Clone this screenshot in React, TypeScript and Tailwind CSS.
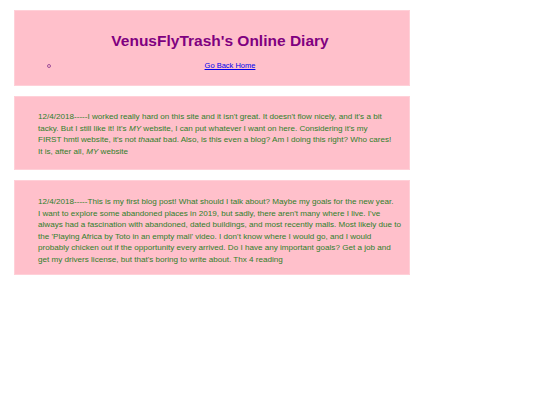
import React from 'react';

const body = '"Comic Sans MS", "Liberation Sans", sans-serif';

function Post({ lines, h, pt }: { lines: React.ReactNode[]; h: string; pt: string }) {
  return (
    <div className={`w-[396px] bg-[#ffc0cb] border border-[#ffd0d8] pl-[23px] ${h} ${pt}`}>
      <p className="text-[8.1px] leading-[11.6px] text-[#2f7f2a] whitespace-nowrap" style={{ fontFamily: body }}>
        {lines.map((l, i) => (
          <React.Fragment key={i}>
            {l}
            {i < lines.length - 1 && <br />}
          </React.Fragment>
        ))}
      </p>
    </div>
  );
}

export default function App() {
  return (
    <div className="min-h-[405px] bg-white pl-[14px] pt-[10px] flex flex-col gap-[10px]" style={{ fontFamily: body }}>
      <div className="w-[396px] h-[76px] bg-[#ffc0cb] border border-[#ffd0d8] flex flex-col">
        <h1 className="mt-[20px] text-center pl-[16px] text-[15.5px] leading-[20px] font-bold text-[#800080]">
          VenusFlyTrash's Online Diary
        </h1>
        <ul className="mt-[10px] flex items-center">
          <li className="flex items-center w-full">
            <span className="ml-[32px] w-[4px] h-[4px] rounded-full border border-[#a0509a]" />
            <a href="#" className="flex-1 text-center text-[7.5px] leading-[10px] text-[#0000ee] underline">
              Go Back Home
            </a>
          </li>
        </ul>
      </div>

      <Post
        h="h-[74px]"
        pt="pt-[14px]"
        lines={[
          "12/4/2018-----I worked really hard on this site and it isn't great. It doesn't flow nicely, and it's a bit",
          <>tacky. But I still like it! It's <i>MY</i> website, I can put whatever I want on here. Considering it's my</>,
          <>FIRST hmtl website, it's not <i>thaaat</i> bad. Also, is this even a blog? Am I doing this right? Who cares!</>,
          <>It is, after all, <i>MY</i> website</>,
        ]}
      />

      <Post
        h="h-[95px]"
        pt="pt-[15px]"
        lines={[
          '12/4/2018-----This is my first blog post! What should I talk about? Maybe my goals for the new year.',
          "I want to explore some abandoned places in 2019, but sadly, there aren't many where I live. I've",
          'always had a fascination with abandoned, dated buildings, and most recently malls. Most likely due to',
          "the 'Playing Africa by Toto in an empty mall' video. I don't know where I would go, and I would",
          'probably chicken out if the opportunity every arrived. Do I have any important goals? Get a job and',
          "get my drivers license, but that's boring to write about. Thx 4 reading",
        ]}
      />
    </div>
  );
}
